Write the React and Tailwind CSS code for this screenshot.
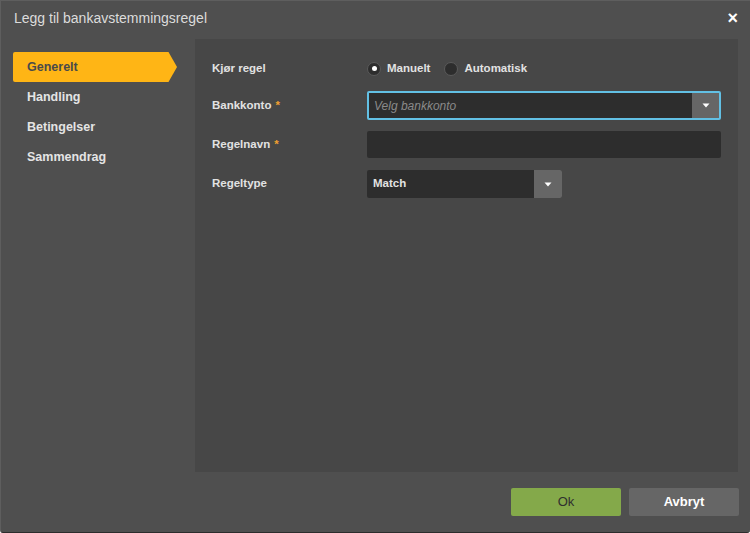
import { useState } from 'react'

const STEG = ['Generelt', 'Handling', 'Betingelser', 'Sammendrag']

function Caret() {
  return (
    <svg width="8" height="5" viewBox="0 0 8 5">
      <path d="M0.5 0.5 H7.5 L4 4.5 Z" fill="#ffffff" />
    </svg>
  )
}

function Radio({ checked, label, onClick }) {
  return (
    <button type="button" onClick={onClick} className="flex items-center gap-[6px] text-[11.5px] font-bold text-[#e2e2e2]">
      <span className="w-[14px] h-[14px] rounded-full bg-[#2d2d2d] border border-[#5a5a5a] flex items-center justify-center">
        {checked && <span className="w-[5px] h-[5px] rounded-full bg-white" />}
      </span>
      {label}
    </button>
  )
}

function Rad({ label, required, children, className = '' }) {
  return (
    <div className={`flex items-center ${className}`}>
      <div className="w-[155px] text-[11.5px] font-bold text-[#e2e2e2]">
        {label}
        {required && <span className="text-[#f0a030] ml-[4px]">*</span>}
      </div>
      {children}
    </div>
  )
}

export default function App() {
  const [modus, setModus] = useState('manuelt')
  const aktiv = 0

  return (
    <div className="w-[750px] h-[533px] bg-[#4f4f4f] border-t border-l border-[#5e5e5e] border-b border-b-[#2c2c2c] rounded-b-[3px] flex flex-col overflow-hidden" style={{ fontFamily: '"Liberation Sans", Arial, sans-serif' }}>
      {/* Tittel */}
      <div className="h-[34px] flex items-center justify-between pl-[13px] pr-[12px] shrink-0">
        <span className="text-[14px] text-[#dcdcdc]">Legg til bankavstemmingsregel</span>
        <button className="text-white text-[18px] font-bold leading-none">×</button>
      </div>

      <div className="flex flex-1 pl-[11px] pr-[12px] pt-[4px]">
        {/* Steg */}
        <div className="w-[183px] pl-[1px] pt-[13px] shrink-0">
          {STEG.map((s, i) => (
            <div key={s} className="h-[30px] flex items-center">
              {i === aktiv ? (
                <div className="flex items-center h-[30px]">
                  <div className="w-[155px] h-[30px] bg-[#ffb515] rounded-l-[2px] flex items-center pl-[14px] text-[12.5px] font-bold text-[#4a4a4a]">{s}</div>
                  <svg width="9" height="30" viewBox="0 0 9 30"><path d="M0 0 H0.5 L9 15 L0.5 30 H0 Z" fill="#ffb515" /></svg>
                </div>
              ) : (
                <div className="pl-[14px] text-[12.5px] font-bold text-[#e4e4e4]">{s}</div>
              )}
            </div>
          ))}
        </div>

        {/* Innhold */}
        <div className="flex-1 bg-[#474747] h-[433px] pt-[15px] pl-[17px] pr-[17px]">
          <Rad label="Kjør regel" className="h-[29px]">
            <div className="flex items-center gap-[14px]">
              <Radio checked={modus === 'manuelt'} label="Manuelt" onClick={() => setModus('manuelt')} />
              <Radio checked={modus === 'auto'} label="Automatisk" onClick={() => setModus('auto')} />
            </div>
          </Rad>
          <Rad label="Bankkonto" required className="mt-[8px]">
            <div className="flex-1 h-[29px] flex border-2 border-[#62c0e4] rounded-[2px] bg-[#2d2d2d]">
              <span className="flex-1 flex items-center pl-[5px] text-[12px] italic text-[#8a8a8a]">Velg bankkonto</span>
              <span className="w-[27px] bg-[#666666] flex items-center justify-center"><Caret /></span>
            </div>
          </Rad>
          <Rad label="Regelnavn" required className="mt-[11px]">
            <div className="flex-1 h-[27px] bg-[#2d2d2d] rounded-[2px]" />
          </Rad>
          <Rad label="Regeltype" className="mt-[12px]">
            <div className="w-[195px] h-[28px] flex bg-[#2d2d2d] rounded-[2px]">
              <span className="flex-1 flex items-center pl-[6px] text-[11.5px] font-bold text-[#e2e2e2]">Match</span>
              <span className="w-[28px] bg-[#666666] flex items-center justify-center rounded-r-[2px]"><Caret /></span>
            </div>
          </Rad>
        </div>
      </div>

      {/* Knapper */}
      <div className="flex justify-end gap-[8px] pr-[11px] pb-[16px] pt-[16px] shrink-0">
        <button className="w-[110px] h-[28px] bg-[#84a94a] rounded-[2px] text-[13px] text-[#2f2f2f]">Ok</button>
        <button className="w-[110px] h-[28px] bg-[#666666] rounded-[2px] text-[13px] font-bold text-white">Avbryt</button>
      </div>
    </div>
  )
}
